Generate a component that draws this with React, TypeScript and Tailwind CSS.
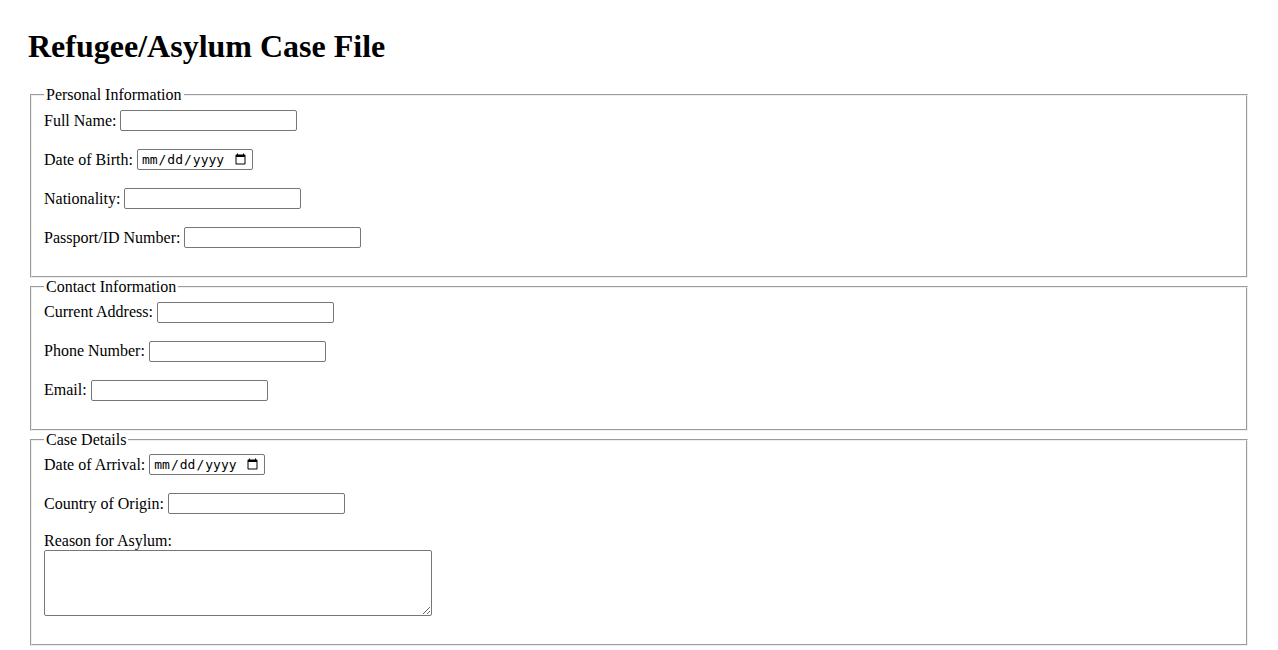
import React from 'react';

const inputCls =
  "w-[177px] h-[21px] border border-[#767676] rounded-[2px] bg-white px-[3px] py-[2px] text-[13.33px] font-['Liberation_Sans',Arial,sans-serif]";
const dateCls =
  "w-[116px] h-[21px] border border-[#767676] rounded-[2px] bg-white px-[3px] text-[13px] font-['DejaVu_Sans_Mono',monospace]";
const fieldsetCls = 'mx-[2px] pt-[5.6px] px-[12px] pb-[10px] [border:2px_groove_ThreeDFace]';

function Row({ label, id, type = 'text' }: { label: string; id: string; type?: string }) {
  return (
    <div className="flex items-center gap-[4px] mb-[18px]">
      <label htmlFor={id}>{label}</label>
      <input id={id} type={type} className={type === 'date' ? dateCls : inputCls} />
    </div>
  );
}

export default function App() {
  return (
    <div className="bg-white text-black px-[28px] pt-[28px] pb-[8px] font-['Liberation_Serif','Times_New_Roman',serif] text-[16px] leading-[normal]">
      <h1 className="text-[32px] font-bold mb-[21.44px]">Refugee/Asylum Case File</h1>

      <form>
        <fieldset className={fieldsetCls}>
          <legend className="px-[2px]">Personal Information</legend>
          <Row label="Full Name:" id="fullName" />
          <Row label="Date of Birth:" id="dob" type="date" />
          <Row label="Nationality:" id="nationality" />
          <Row label="Passport/ID Number:" id="passport" />
        </fieldset>

        <fieldset className={fieldsetCls}>
          <legend className="px-[2px]">Contact Information</legend>
          <Row label="Current Address:" id="address" />
          <Row label="Phone Number:" id="phone" type="tel" />
          <Row label="Email:" id="email" type="email" />
        </fieldset>

        <fieldset className={fieldsetCls}>
          <legend className="px-[2px]">Case Details</legend>
          <Row label="Date of Arrival:" id="arrival" type="date" />
          <Row label="Country of Origin:" id="origin" />
          <label htmlFor="reason" className="block">Reason for Asylum:</label>
          <textarea
            id="reason"
            className="block w-[388px] h-[66px] border border-[#767676] rounded-[2px] bg-white resize mb-[18px] text-[13.33px] font-['DejaVu_Sans_Mono',monospace]"
          />
        </fieldset>
      </form>
    </div>
  );
}
